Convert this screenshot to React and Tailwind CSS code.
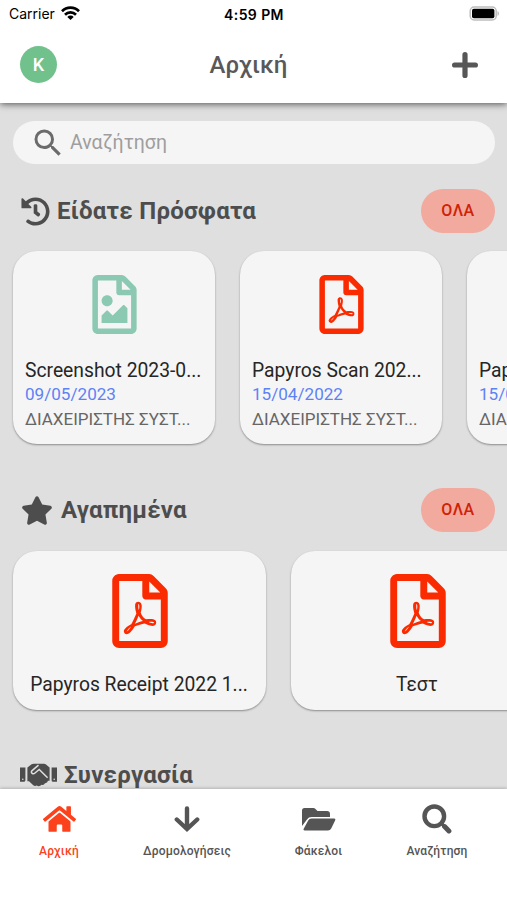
import React from 'react';
import { FaHistory, FaStar, FaHome, FaRegFileImage, FaRegFilePdf } from 'react-icons/fa';
import { MdSearch } from 'react-icons/md';

const recent = [
  { name: 'Screenshot 2023-0...', date: '09/05/2023', image: true },
  { name: 'Papyros Scan 202...', date: '15/04/2022' },
  { name: 'Papyros Scan 202...', date: '15/04/2022' },
];

function PlusIcon() {
  return (
    <svg className="justify-self-end" width="26" height="26" viewBox="0 0 26 26" fill="none" stroke="#575757" strokeWidth="5.2" strokeLinecap="round">
      <path d="M13 2.6v20.8M2.6 13h20.8" />
    </svg>
  );
}

function ArrowIcon() {
  return (
    <svg width="26" height="27" viewBox="0 0 26 27" fill="none" stroke="currentColor" strokeWidth="4.4" strokeLinecap="round" strokeLinejoin="miter">
      <path d="M13 2.4v19.8M2.8 13.5 13 23.1l10.2-9.6" />
    </svg>
  );
}

function FolderIcon() {
  return (
    <svg width="34" height="23" viewBox="0 0 34 23" fill="currentColor">
      <path d="M0 18V2.5Q0 0 2.5 0H11.5Q12.5 0 13.2.7L15.5 3H25Q28 3 28 6V9H9.5Q6.6 9 5.2 11.2Z" />
      <path d="M9.5 10.6H32.3Q34 10.6 33.2 12.3L29.2 20.5Q28.2 22.5 26 22.5H2.6Q.8 22.5 1.7 20.7L6.2 12.5Q7.2 10.6 9.5 10.6Z" />
    </svg>
  );
}

function NavSearchIcon() {
  return (
    <svg width="30" height="30" viewBox="0 0 30 30" fill="none" stroke="currentColor">
      <circle cx="12.3" cy="12.3" r="9.8" strokeWidth="4.4" />
      <path d="m19.5 19.5 3 3" strokeWidth="3.2" />
      <path d="m22.6 22.6 4.3 4.3" strokeWidth="5" strokeLinecap="round" />
    </svg>
  );
}

function HandshakeIcon() {
  return (
    <svg width="37" height="24" viewBox="0 0 37 24" fill="currentColor">
      <path d="M0 4.5h5.4v12.7q0 1.6-1.6 1.6H0ZM31.6 4.5H37v14.3h-3.8q-1.6 0-1.6-1.6Z" />
      <path d="M7.4 4.5 11.6 1.3Q12.5.7 13.6.7H24Q25.2.7 26 1.5L29.6 4.6V17.8H28Q27.4 20.3 25 20.2 24 22.4 21.7 21.8 19.2 24.2 16.8 22.6 14.6 23.6 13 22L9 18.3H7.4Z" />
      <path d="M18.5 2.1 12.1 7.6Q10.6 9.3 12.2 10.4 13.5 11.3 15 10L19.2 6.5 27.6 14.8" fill="none" stroke="#dfdfdf" strokeWidth="1.5" />
      <circle cx="2.8" cy="16.2" r=".8" fill="#dfdfdf" />
      <circle cx="34.2" cy="16.2" r=".8" fill="#dfdfdf" />
    </svg>
  );
}

function StatusBar() {
  return (
    <div className="grid h-[28px] grid-cols-3 items-center pl-[9px] pr-[7px] text-black font-['Inter',sans-serif]">
      <div className="flex items-center gap-[6px]">
        <span className="text-[14px] leading-[28px]">Carrier</span>
        <svg className="-mt-[2px]" width="19" height="14" viewBox="0 0 19 14" fill="none" stroke="black" strokeWidth="2.7">
          <path d="M1 5.2a12 12 0 0 1 17 0" />
          <path d="M4 8.7a7.8 7.8 0 0 1 11 0" />
          <path d="M9.5 14 6.3 11a4.4 4.4 0 0 1 6.4 0Z" fill="black" stroke="none" />
        </svg>
      </div>
      <span className="pr-[1px] text-center text-[14px] font-semibold tracking-[0.4px]">4:59 PM</span>
      <svg className="-mt-[2px] justify-self-end" width="31" height="15" viewBox="0 0 31 15">
        <rect x="1.2" y="1" width="26" height="13" rx="4" fill="white" stroke="#bdbdbd" strokeWidth="1.5" />
        <rect x="3" y="2.8" width="22.4" height="9.4" rx="1.8" fill="black" />
        <path d="M28.5 5v5c2-1 2-4 0-5Z" fill="#bdbdbd" />
      </svg>
    </div>
  );
}

function SectionHead({ icon, title, gap, tracking }) {
  return (
    <div className="flex h-[44px] items-center justify-between pl-[21px] pr-[12px]">
      <h2 className={`flex items-center ${gap} text-[#4d4d4d]`}>
        {icon}
        <span className={`${tracking} whitespace-nowrap text-[24px] leading-[32px] font-bold`}>{title}</span>
      </h2>
      <button className="h-[44px] w-[74px] rounded-full bg-[#f2a99e] pb-px text-[16px] font-medium tracking-[0.5px] text-[#cf2207]">ΟΛΑ</button>
    </div>
  );
}

function RecentCard({ item }) {
  return (
    <article className="flex h-[193px] w-[202px] shrink-0 flex-col rounded-[24px] bg-[#f5f5f5] px-[12px] pt-[24px] shadow-[0_1px_2px_rgba(0,0,0,0.38)]">
      {item.image
        ? <FaRegFileImage className="h-[59px] w-[45px] self-center text-[#8bc9b3]" />
        : <FaRegFilePdf className="h-[59px] w-[45px] self-center text-[#fa2b00]" />}
      <div className="mt-[25px] whitespace-nowrap text-[19.3px] leading-[24px] text-[#262626]">{item.name}</div>
      <div className="-mt-px text-[17.1px] leading-[24px] text-[#5d82f5]">{item.date}</div>
      <div className="mt-px whitespace-nowrap text-[17px] leading-[25px] text-[#666]">ΔΙΑΧΕΙΡΙΣΤΗΣ ΣΥΣΤ...</div>
    </article>
  );
}

function FavoriteCard({ name }) {
  return (
    <article className="flex h-[159px] w-[253px] shrink-0 flex-col items-center rounded-[24px] bg-[#f5f5f5] pt-[23px] shadow-[0_1px_2px_rgba(0,0,0,0.38)]">
      <FaRegFilePdf className="h-[74px] w-[56px] text-[#fa2b00]" />
      <div className="mt-[24px] whitespace-nowrap pr-px text-[19.3px] leading-[26px] text-[#262626]">{name}</div>
    </article>
  );
}

function NavItem({ icon, label, color }) {
  return (
    <div className={`flex flex-col items-center ${color}`}>
      <div className="flex h-[32px] items-center">{icon}</div>
      <span className="mt-[8px] text-[12px] leading-[16px] font-medium tracking-[0.15px]">{label}</span>
    </div>
  );
}

export default function App() {
  return (
    <div className="flex h-[900px] w-[507px] flex-col overflow-hidden bg-[#dfdfdf] font-['Roboto',sans-serif]">
      <header className="relative z-10 h-[103px] shrink-0 bg-white shadow-[0_1px_7px_rgba(0,0,0,0.65)]">
        <StatusBar />
        <div className="grid h-[73px] grid-cols-3 items-center pl-[20px] pr-[29px]">
          <div className="flex h-[37px] w-[37px] items-center justify-center rounded-full bg-[#71c18d] text-[18px] font-medium text-white">K</div>
          <h1 className="-ml-px text-center text-[24px] font-medium text-[#595959]">Αρχική</h1>
          <PlusIcon />
        </div>
      </header>

      <main className="flex min-h-0 grow flex-col overflow-hidden pt-[18px]">
        <div className="mx-[13px] flex h-[43px] w-[482px] shrink-0 items-center gap-[4px] rounded-full bg-[#f5f5f5] pl-[17px]">
          <MdSearch className="h-[36px] w-[36px] text-[#6b6b6b]" />
          <span className="pt-px text-[19.5px] text-[#9e9e9e]">Αναζήτηση</span>
        </div>

        <section className="mt-[25px] shrink-0">
          <SectionHead icon={<FaHistory className="h-[29px] w-[29px]" />} title="Είδατε Πρόσφατα" gap="gap-[7px]" tracking="tracking-[0.25px]" />
          <div className="mt-[18px] flex gap-[25px] pl-[13px]">
            {recent.map((item, i) => <RecentCard key={i} item={item} />)}
          </div>
        </section>

        <section className="mt-[44px] shrink-0">
          <SectionHead icon={<FaStar className="h-[31px] w-[32px]" />} title="Αγαπημένα" gap="gap-[8px]" tracking="tracking-[0.2px]" />
          <div className="mt-[19px] flex gap-[25px] pl-[13px]">
            <FavoriteCard name="Papyros Receipt 2022 1..." />
            <FavoriteCard name="Τεστ" />
          </div>
        </section>

        <section className="mt-[49px] shrink-0">
          <h2 className="flex items-center gap-[7px] pl-[20px] text-[#4d4d4d]">
            <HandshakeIcon />
            <span className="text-[24px] leading-[32px] font-bold tracking-[0.25px]">Συνεργασία</span>
          </h2>
        </section>
      </main>

      <nav className="relative z-10 flex h-[111px] shrink-0 bg-white pt-[14px] shadow-[0_-1px_3px_rgba(0,0,0,0.2)]">
        <div className="w-[118px]"><NavItem color="text-[#fc421c]" label="Αρχική" icon={<FaHome className="h-[32px] w-[33px]" />} /></div>
        <div className="w-[138px]"><NavItem color="text-[#555]" label="Δρομολογήσεις" icon={<ArrowIcon />} /></div>
        <div className="w-[125px]"><NavItem color="text-[#555]" label="Φάκελοι" icon={<FolderIcon />} /></div>
        <div className="w-[112px]"><NavItem color="text-[#555]" label="Αναζήτηση" icon={<NavSearchIcon />} /></div>
      </nav>
    </div>
  );
}
